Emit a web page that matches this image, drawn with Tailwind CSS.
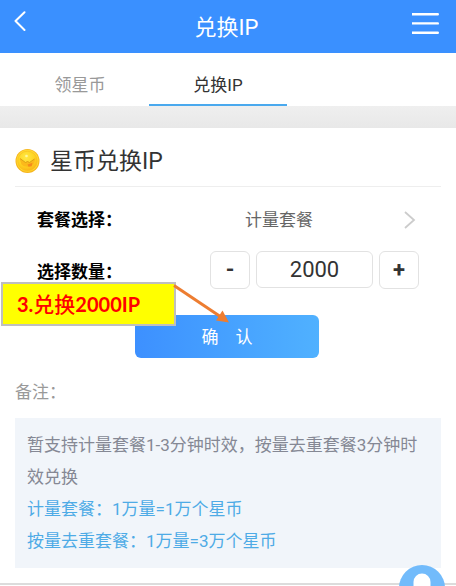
<!DOCTYPE html>
<html lang="zh-CN">
<head>
<meta charset="utf-8">
<meta name="viewport" content="width=device-width, initial-scale=1">
<title>兑换IP</title>
<script src="https://cdn.jsdelivr.net/npm/@tailwindcss/browser@4"></script>
</head>
<body class="bg-white font-[Roboto,'Noto_Sans_CJK_SC',sans-serif] text-[17px] leading-6 text-[#333]">
<div class="relative h-screen overflow-hidden">
  <header class="flex h-[53px] items-center justify-between bg-[#3a90ff] pl-[13px] pr-4 text-white">
    <button type="button" aria-label="返回" class="mb-3 w-7">
      <svg class="h-5 w-4" viewBox="0 0 16 20" fill="none" stroke="currentColor" stroke-width="2" stroke-linecap="round" stroke-linejoin="round"><path d="M11.500 1.200 2.500 10l9 9"/></svg>
    </button>
    <h1 class="pt-0.5 text-[22px] leading-8">兑换IP</h1>
    <button type="button" aria-label="菜单" class="mb-2">
      <svg class="h-6 w-7" viewBox="0 0 28 24" fill="none" stroke="currentColor" stroke-width="2.400" stroke-linecap="round"><path d="M.2 3.300h25.600M.2 12.400h25.600M.2 21.700h25.600"/></svg>
    </button>
  </header>

  <nav class="flex h-[53px] pl-[11px]">
    <a href="#claim" class="flex w-[138px] items-center justify-center pt-2.5 text-[#999]">领星币</a>
    <a href="#exchange" aria-current="page" class="flex w-[138px] items-center justify-center border-b-2 border-[#4aa9ee] pt-3">兑换IP</a>
  </nav>
  <div class="h-[22px] bg-linear-to-b from-[#efefef] to-[#e8e8e8]"></div>

  <main class="border-b-2 border-[#dcdcdc] px-[15px] pb-[15px]">
    <div class="flex h-[59px] items-center gap-[10px] border-b border-[#eee] pt-2">
      <svg class="h-6 w-[25px]" viewBox="0 0 24 24" aria-hidden="true">
        <defs><radialGradient id="coin" cx=".42" cy=".3" r=".75"><stop offset="0" stop-color="#ffe945"/><stop offset=".6" stop-color="#ffd21f"/><stop offset="1" stop-color="#f9ae17"/></radialGradient></defs>
        <circle cx="12" cy="12" r="12" fill="#f6b51d"/>
        <circle cx="12" cy="11.700" r="11" fill="#ffd832"/>
        <circle cx="12" cy="12" r="9.800" fill="url(#coin)" stroke="#f6be1c" stroke-width=".6"/>
        <path d="M4 9.500 10 13.500l2-1.200 2 1.200 6-4-2 6c-3 3-9 3-12 0Z" fill="#fbb91b"/>
        <path d="m4.500 9.500 5.500 4 2-1 2 1 5-3.500" fill="none" stroke="#d99b14" stroke-width=".9"/>
        <path d="m12 15.500 5-1.700-.8 3.500-3.200.4Z" fill="#f58a1c"/>
        <circle cx="11" cy="7" r="1.300" fill="#fff7a0"/>
      </svg>
      <h2 class="pt-0.5 text-[23px] leading-8">星币兑换IP</h2>
    </div>

    <form class="flex flex-col px-[22px]">
      <div class="mt-[21px] flex h-6 items-center">
        <label for="plan" class="w-[150px] font-bold text-black">套餐选择：</label>
        <div class="relative flex-1">
          <select id="plan" class="w-full appearance-none bg-transparent pr-12 text-center text-[#666]"><option>计量套餐</option></select>
          <svg class="pointer-events-none absolute top-0.5 right-[3px] h-5 w-4" viewBox="0 0 16 20" fill="none" stroke="#ccc" stroke-width="1.800"><path d="m5 2 9 8-9 8"/></svg>
        </div>
      </div>
      <div class="mt-[19px] flex items-center">
        <label for="qty" class="flex-1 pt-1 font-bold text-black">选择数量：</label>
        <div class="flex gap-[6px]">
          <button type="button" aria-label="减少" class="h-[38px] w-10 rounded-md border border-[#e2e2e2] text-[22px] font-bold">-</button>
          <input id="qty" type="text" inputmode="numeric" value="2000" class="h-[37px] w-[117px] rounded-md border border-[#e2e2e2] text-center text-[22px]">
          <button type="button" aria-label="增加" class="h-[38px] w-10 rounded-md border border-[#e2e2e2] text-[22px] font-bold">+</button>
        </div>
      </div>
      <button type="submit" class="mt-[26px] mr-0.5 flex h-[43px] w-[184px] items-center justify-center gap-[17px] self-center rounded-md bg-linear-to-r from-[#3d90ff] to-[#50b1ff] text-white"><span>确</span><span>认</span></button>
    </form>

    <p class="mt-[22px] text-[#999]">备注：</p>
    <div class="mt-[14px] bg-[#f1f5fa] px-3 py-[11px] leading-8 text-[#858894]">
      <p>暂支持计量套餐1-3分钟时效，按量去重套餐3分钟时效兑换</p>
      <p class="text-[#4eabe6]">计量套餐：1万量=1万个星币</p>
      <p class="text-[#4eabe6]">按量去重套餐：1万量=3万个星币</p>
    </div>
  </main>

  <button type="button" aria-label="客服" class="absolute top-[565px] right-[10px] h-12 w-12">
    <svg class="h-12 w-12" viewBox="0 0 48 48"><circle cx="24" cy="23" r="23" fill="#72bbfb"/><path d="M15.500 28V17a8.500 8.500 0 0 1 17 0v11Z" fill="#fff"/></svg>
  </button>

  <div class="absolute top-[282px] left-px flex h-11 w-[175px] items-center border-2 border-[#bfbfbf] bg-[#ff0] pl-[14px] font-[Lato,'Noto_Sans_CJK_SC',sans-serif] text-xl font-bold text-[#f00]"><p>3.<span class="text-[21px] font-medium">兑换</span>2000IP</p></div>
  <svg class="absolute top-[280px] left-[170px] h-11 w-[62px]" viewBox="0 0 62 44" aria-hidden="true"><path d="M4 5.500 51 37" stroke="#ed7d31" stroke-width="3" fill="none"/><path d="M59 42.500 46 40.500 52.500 30.500Z" fill="#ed7d31"/></svg>
</div>
</body>
</html>
